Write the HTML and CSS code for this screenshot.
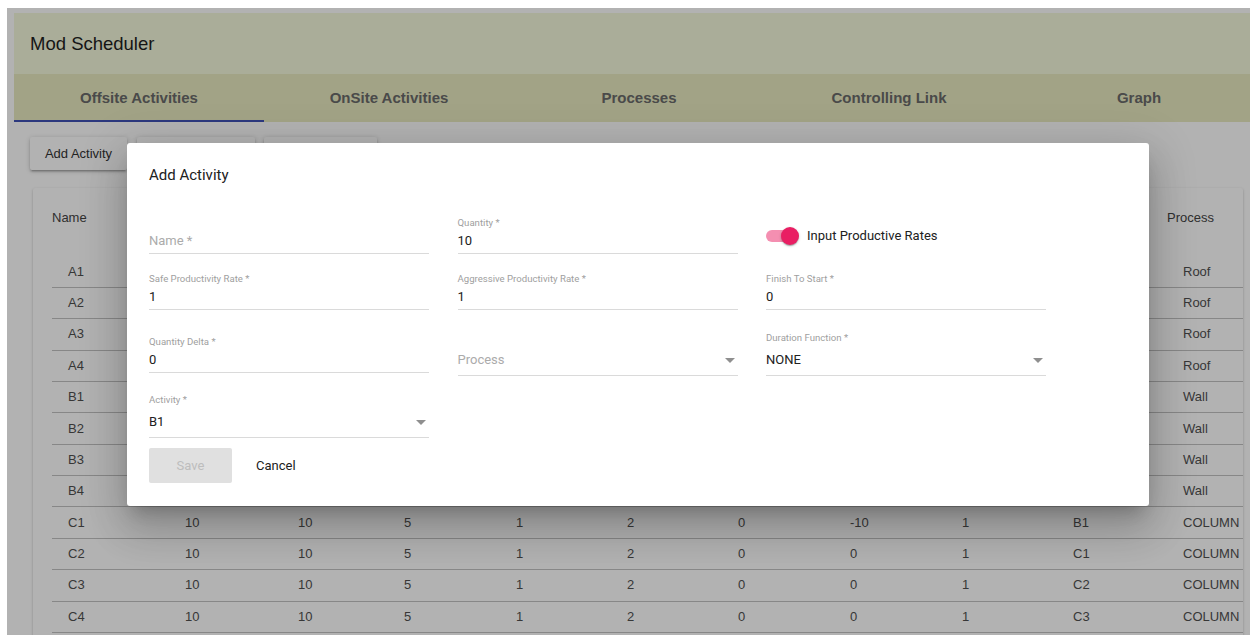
FILE: index.html
```html
<!DOCTYPE html>
<html lang="en">
<head>
<meta charset="utf-8">
<title>Mod Scheduler</title>
<link rel="stylesheet" href="styles.css">
</head>
<body>
<div class="screen">
  <div class="app">
    <header class="appbar">
      <h1 class="appbar-title">Mod Scheduler</h1>
    </header>
    <nav class="tabs">
      <div class="tab tab-active">Offsite Activities</div>
      <div class="tab">OnSite Activities</div>
      <div class="tab">Processes</div>
      <div class="tab">Controlling Link</div>
      <div class="tab">Graph</div>
    </nav>
    <main class="content">
      <div class="actions">
        <button class="btn btn-add">Add Activity</button>
        <button class="btn btn-edit">Edit Activity</button>
        <button class="btn btn-delete">Delete Activity</button>
      </div>
      <section class="card">
        <div class="grid-table">
          <div class="trow thead">
            <div class="th">Name</div>
            <div class="th">Quantity</div>
            <div class="th">Duration</div>
            <div class="th">Delta</div>
            <div class="th">Safe Rate</div>
            <div class="th">Aggr. Rate</div>
            <div class="th">Finish Start</div>
            <div class="th">Lag</div>
            <div class="th">Crew</div>
            <div class="th">Predecessor</div>
            <div class="th">Process</div>
          </div>
          <div class="trow"><div class="td">A1</div><div class="td">10</div><div class="td">10</div><div class="td">5</div><div class="td">1</div><div class="td">2</div><div class="td">0</div><div class="td">0</div><div class="td">1</div><div class="td"></div><div class="td">Roof</div></div>
          <div class="trow"><div class="td">A2</div><div class="td">10</div><div class="td">10</div><div class="td">5</div><div class="td">1</div><div class="td">2</div><div class="td">0</div><div class="td">0</div><div class="td">1</div><div class="td">A1</div><div class="td">Roof</div></div>
          <div class="trow"><div class="td">A3</div><div class="td">10</div><div class="td">10</div><div class="td">5</div><div class="td">1</div><div class="td">2</div><div class="td">0</div><div class="td">0</div><div class="td">1</div><div class="td">A2</div><div class="td">Roof</div></div>
          <div class="trow"><div class="td">A4</div><div class="td">10</div><div class="td">10</div><div class="td">5</div><div class="td">1</div><div class="td">2</div><div class="td">0</div><div class="td">0</div><div class="td">1</div><div class="td">A3</div><div class="td">Roof</div></div>
          <div class="trow"><div class="td">B1</div><div class="td">10</div><div class="td">10</div><div class="td">5</div><div class="td">1</div><div class="td">2</div><div class="td">0</div><div class="td">-10</div><div class="td">1</div><div class="td">A4</div><div class="td">Wall</div></div>
          <div class="trow"><div class="td">B2</div><div class="td">10</div><div class="td">10</div><div class="td">5</div><div class="td">1</div><div class="td">2</div><div class="td">0</div><div class="td">0</div><div class="td">1</div><div class="td">B1</div><div class="td">Wall</div></div>
          <div class="trow"><div class="td">B3</div><div class="td">10</div><div class="td">10</div><div class="td">5</div><div class="td">1</div><div class="td">2</div><div class="td">0</div><div class="td">0</div><div class="td">1</div><div class="td">B2</div><div class="td">Wall</div></div>
          <div class="trow"><div class="td">B4</div><div class="td">10</div><div class="td">10</div><div class="td">5</div><div class="td">1</div><div class="td">2</div><div class="td">0</div><div class="td">0</div><div class="td">1</div><div class="td">B3</div><div class="td">Wall</div></div>
          <div class="trow"><div class="td">C1</div><div class="td">10</div><div class="td">10</div><div class="td">5</div><div class="td">1</div><div class="td">2</div><div class="td">0</div><div class="td">-10</div><div class="td">1</div><div class="td">B1</div><div class="td">COLUMN</div></div>
          <div class="trow"><div class="td">C2</div><div class="td">10</div><div class="td">10</div><div class="td">5</div><div class="td">1</div><div class="td">2</div><div class="td">0</div><div class="td">0</div><div class="td">1</div><div class="td">C1</div><div class="td">COLUMN</div></div>
          <div class="trow"><div class="td">C3</div><div class="td">10</div><div class="td">10</div><div class="td">5</div><div class="td">1</div><div class="td">2</div><div class="td">0</div><div class="td">0</div><div class="td">1</div><div class="td">C2</div><div class="td">COLUMN</div></div>
          <div class="trow"><div class="td">C4</div><div class="td">10</div><div class="td">10</div><div class="td">5</div><div class="td">1</div><div class="td">2</div><div class="td">0</div><div class="td">0</div><div class="td">1</div><div class="td">C3</div><div class="td">COLUMN</div></div>
        </div>
      </section>
    </main>
  </div>

  <div class="backdrop"></div>

  <div class="dialog" role="dialog" aria-labelledby="dialog-title">
    <h2 class="dialog-title" id="dialog-title">Add Activity</h2>
    <div class="form-grid">
      <div class="field field-empty">
        <span class="field-value">Name *</span>
      </div>
      <div class="field">
        <span class="field-label">Quantity *</span>
        <span class="field-value">10</span>
      </div>
      <label class="switch-field">
        <span class="switch">
          <span class="switch-track"></span>
          <span class="switch-thumb"></span>
        </span>
        <span class="switch-label">Input Productive Rates</span>
      </label>

      <div class="field">
        <span class="field-label">Safe Productivity Rate *</span>
        <span class="field-value">1</span>
      </div>
      <div class="field">
        <span class="field-label">Aggressive Productivity Rate *</span>
        <span class="field-value">1</span>
      </div>
      <div class="field">
        <span class="field-label">Finish To Start *</span>
        <span class="field-value">0</span>
      </div>

      <div class="field field-low">
        <span class="field-label">Quantity Delta *</span>
        <span class="field-value">0</span>
      </div>
      <div class="field field-select field-empty">
        <span class="field-value">Process
          <svg class="caret" width="10" height="5" viewBox="0 0 10 5"><path d="M0 0h10L5 5z"/></svg>
        </span>
      </div>
      <div class="field field-select">
        <span class="field-label">Duration Function *</span>
        <span class="field-value">NONE
          <svg class="caret" width="10" height="5" viewBox="0 0 10 5"><path d="M0 0h10L5 5z"/></svg>
        </span>
      </div>

      <div class="field field-select">
        <span class="field-label">Activity *</span>
        <span class="field-value">B1
          <svg class="caret" width="10" height="5" viewBox="0 0 10 5"><path d="M0 0h10L5 5z"/></svg>
        </span>
      </div>
    </div>
    <div class="dialog-actions">
      <button class="dbtn dbtn-save" disabled>Save</button>
      <button class="dbtn dbtn-cancel">Cancel</button>
    </div>
  </div>
</div>
</body>
</html>
```

FILE: styles.css
```css
html, body {
  margin: 0;
  padding: 0;
  background: #ffffff;
  overflow: hidden;
}

body {
  font-family: "Liberation Sans", Arial, sans-serif;
}

/* visible browser area with modal open */
.screen {
  position: relative;
  margin: 8px 0 0 7px;
  height: 627px;
  overflow: hidden;
  background: #ffffff;
}

.app {
  width: 1250px;
  padding: 5px 0 0 7px;
}

/* ---------- app bar ---------- */
.appbar {
  height: 61px;
  background: #f4f8dc;
  display: flex;
  align-items: center;
  padding-left: 16px;
}

.appbar-title {
  margin: 0;
  font-size: 18.5px;
  font-weight: 400;
  color: #1f1f1f;
}

/* ---------- tabs ---------- */
.tabs {
  display: grid;
  grid-template-columns: repeat(5, 250px);
  height: 48px;
  background: #e9eac1;
}

.tab {
  display: flex;
  align-items: center;
  justify-content: center;
  padding-bottom: 2px;
  font-size: 15px;
  font-weight: 700;
  color: #6a6a6a;
}

.tab-active {
  box-shadow: inset 0 -2px 0 #3f51b5;
}

/* ---------- page content ---------- */
.content {
  padding: 15px 0 0 16px;
}

.actions {
  display: flex;
  gap: 9.5px;
}

.btn {
  height: 33px;
  border: none;
  border-radius: 2px;
  background: #ffffff;
  font-family: "Liberation Sans", Arial, sans-serif;
  font-size: 13px;
  color: #333333;
  padding: 0;
  box-shadow: 0 1px 5px rgba(0, 0, 0, 0.2), 0 2px 2px rgba(0, 0, 0, 0.14), 0 3px 1px -2px rgba(0, 0, 0, 0.12);
}

.btn-add { width: 97px; }
.btn-edit { width: 118px; }
.btn-delete { width: 113px; }

.card {
  margin: 18px 0 0 3px;
  width: 1210px;
  padding-left: 19px;
  box-sizing: border-box;
  background: #ffffff;
  border-radius: 2px;
  box-shadow: 0 1px 3px rgba(0, 0, 0, 0.2), 0 1px 1px rgba(0, 0, 0, 0.14), 0 2px 1px -1px rgba(0, 0, 0, 0.12);
  height: 470px;
}

.grid-table {
  font-size: 13px;
  color: #505050;
}

.trow {
  display: grid;
  grid-template-columns: 117px 113px 106px 112px 111px 111px 112px 112px 111px 110px 76px;
  height: 31.36px;
  box-sizing: border-box;
  border-bottom: 1px solid #c2c2c2;
  align-items: center;
}

.thead {
  height: 68.6px;
  border-bottom: none;
  align-items: start;
  color: #444444;
}

.th {
  padding-top: 22px;
  line-height: 16px;
  white-space: nowrap;
}

.td {
  padding-left: 16px;
  line-height: 16px;
  white-space: nowrap;
}

/* ---------- modal ---------- */
.backdrop {
  position: absolute;
  inset: 0;
  background: rgba(0, 0, 0, 0.3);
}

.dialog {
  position: absolute;
  left: 120px;
  top: 135px;
  width: 1022px;
  box-sizing: border-box;
  padding: 0 22px 23px;
  background: #ffffff;
  border-radius: 3px;
  font-family: Roboto, "Liberation Sans", sans-serif;
  box-shadow: 0 11px 15px -7px rgba(0, 0, 0, 0.2), 0 24px 38px 3px rgba(0, 0, 0, 0.14), 0 9px 46px 8px rgba(0, 0, 0, 0.12);
}

.dialog-title {
  margin: 22px 0 0;
  font-size: 15px;
  line-height: 20px;
  font-weight: 400;
  color: #212121;
}

.form-grid {
  margin-top: 32px;
  display: grid;
  grid-template-columns: repeat(3, 280px);
  grid-template-rows: 56px 59px 62px auto;
  column-gap: 28.5px;
  align-items: start;
}

.field {
  display: flex;
  flex-direction: column;
  border-bottom: 1px solid #dadada;
}

.field-label {
  font-size: 9.6px;
  line-height: 12px;
  color: #a0a0a0;
  margin-bottom: 4px;
  white-space: nowrap;
}

.field-value {
  display: flex;
  align-items: center;
  justify-content: space-between;
  font-size: 13px;
  line-height: 16px;
  color: #212121;
  padding-bottom: 4px;
}

.field-empty {
  padding-top: 16px;
}

.field-empty .field-value {
  color: #ababab;
}

.field-low {
  margin-top: 4px;
}

.field-select .field-label {
  margin-bottom: 8px;
}

.field-select .field-value {
  padding-bottom: 7px;
}

.field-select.field-empty {
  padding-top: 20px;
}

.caret {
  margin-right: 3px;
  fill: #8f8f8f;
}

/* toggle switch */
.switch-field {
  height: 37px;
  display: flex;
  align-items: center;
}

.switch {
  position: relative;
  width: 33px;
  height: 18px;
  margin-right: 8px;
}

.switch-track {
  position: absolute;
  left: 0;
  top: 3px;
  width: 30px;
  height: 12px;
  border-radius: 6px;
  background: #f48fb1;
}

.switch-thumb {
  position: absolute;
  left: 15px;
  top: 0;
  width: 18px;
  height: 18px;
  border-radius: 50%;
  background: #e91e63;
  box-shadow: 0 1px 3px rgba(0, 0, 0, 0.2), 0 1px 1px rgba(0, 0, 0, 0.14), 0 2px 1px -1px rgba(0, 0, 0, 0.12);
}

.switch-label {
  font-size: 13px;
  color: #212121;
}

.dialog-actions {
  margin-top: 10px;
  display: flex;
}

.dbtn {
  height: 35px;
  border: none;
  border-radius: 2px;
  font-family: Roboto, "Liberation Sans", sans-serif;
  font-size: 13px;
  padding: 0 16px;
  background: transparent;
}

.dbtn-save {
  width: 83px;
  background: #e0e0e0;
  color: #bdbdbd;
}

.dbtn-cancel {
  margin-left: 8px;
  color: #212121;
}
```
